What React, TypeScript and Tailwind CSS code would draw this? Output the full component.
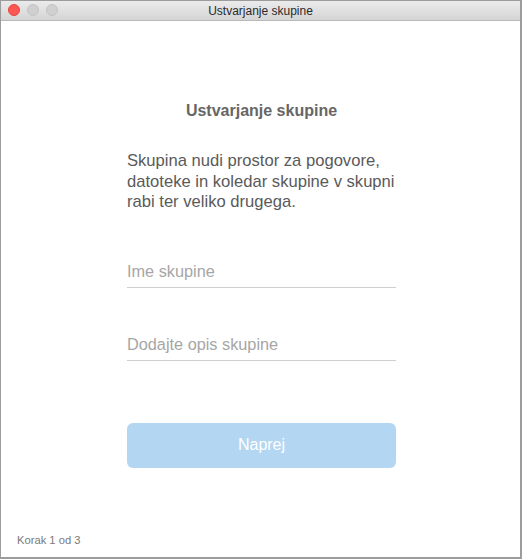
import React from "react";

export default function App() {
  return (
    <div
      className="w-[522px] h-[559px] bg-white border border-[#9c9c9c] border-r-2 border-b-2 flex flex-col overflow-hidden"
      style={{ fontFamily: '"Liberation Sans", Arial, sans-serif' }}
    >
      <div className="relative h-[20px] shrink-0 bg-gradient-to-b from-[#ebebeb] to-[#d5d5d5] border-b border-[#b9b9b9] flex items-center justify-center">
        <div className="absolute left-[7px] top-[3px] flex gap-[7px]">
          <div className="w-[12px] h-[12px] rounded-full bg-[#fc5753] border border-[#e8463f]" />
          <div className="w-[12px] h-[12px] rounded-full bg-[#d0d0d0] border border-[#c4c4c4]" />
          <div className="w-[12px] h-[12px] rounded-full bg-[#d0d0d0] border border-[#c4c4c4]" />
        </div>
        <span className="text-[12px] text-[#2a2a2a] leading-none pt-[1px]">Ustvarjanje skupine</span>
      </div>
      <div className="flex-1 flex flex-col">
        <div className="w-[269px] ml-[126px] flex flex-col">
          <h1 className="mt-[80px] text-center text-[16px] font-bold text-[#666666] leading-[20px]">
            Ustvarjanje skupine
          </h1>
          <p className="mt-[30px] w-[290px] text-[16.6px] text-[#5a5a5a] leading-[20.5px]">
            Skupina nudi prostor za pogovore,
            <br />
            datoteke in koledar skupine v skupni
            <br />
            rabi ter veliko drugega.
          </p>
          <div className="mt-[48px] border-b border-[#cfcfcf] pb-[6px] text-[16.3px] text-[#a6a6a6] leading-[20px]">
            Ime skupine
          </div>
          <div className="mt-[46px] border-b border-[#cfcfcf] pb-[6px] text-[16.3px] text-[#a6a6a6] leading-[20px]">
            Dodajte opis skupine
          </div>
          <button className="mt-[62px] h-[45px] w-full rounded-[6px] bg-[#b3d6f2] text-white text-[16px] flex items-center justify-center">
            Naprej
          </button>
        </div>
        <div className="mt-auto mb-[9px] ml-[16px] text-[11.2px] text-[#7a7a7a] leading-[16px]">Korak 1 od 3</div>
      </div>
    </div>
  );
}
